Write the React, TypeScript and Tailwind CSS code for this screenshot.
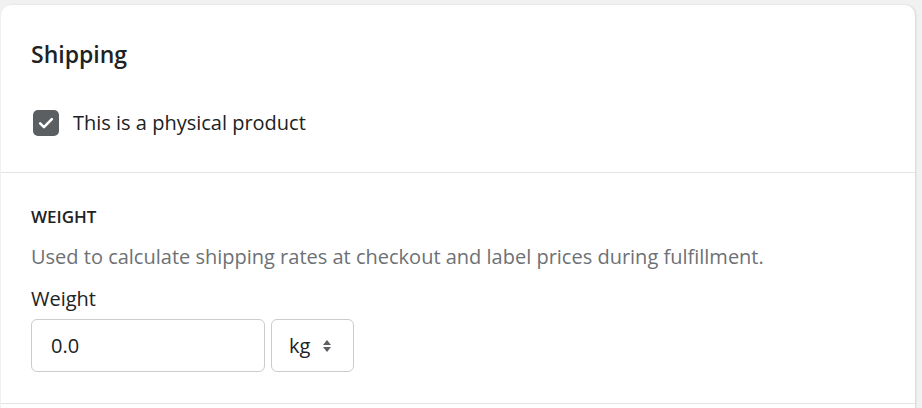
import React, { useState } from 'react';

const font = { fontFamily: '"Open Sans", "Noto Sans", sans-serif' };

export default function App() {
    const [physical, setPhysical] = useState(true);
    const [weight, setWeight] = useState('0.0');

    return (
        <div className="h-[408px] overflow-hidden bg-[#f1f1f1] pt-[5px] pr-[7px] pl-px text-[#202223]" style={font}>
            <div className="bg-white rounded-t-[10px] shadow-[1px_0_2px_rgba(0,0,0,0.12)] overflow-hidden">
                <div className="px-[30px] pt-[33px] pb-[35px]">
                    <h2 className="text-[23px] font-semibold leading-[32px]">Shipping</h2>
                    <label className="mt-[39px] flex items-center gap-[14px] cursor-pointer">
                        <button
                            type="button"
                            onClick={() => setPhysical(!physical)}
                            className="ml-[2px] w-[26px] h-[26px] rounded-[5px] bg-[#5c5f62] flex items-center justify-center"
                        >
                            {physical && (
                                <svg viewBox="0 0 20 20" className="w-[18px] h-[18px]" fill="none" stroke="white" strokeWidth="2.8" strokeLinecap="round" strokeLinejoin="round">
                                    <path d="M3.5 10.5l4.2 4.2 8.8-9" />
                                </svg>
                            )}
                        </button>
                        <span className="text-[20px] leading-[28px]">This is a physical product</span>
                    </label>
                </div>
                <div className="border-t border-[#e1e3e5] px-[30px] pt-[33px] pb-[31px]">
                    <h3 className="text-[17px] font-semibold uppercase leading-[22px]">Weight</h3>
                    <p className="mt-[15px] text-[20px] leading-[28px] text-[#6d7175]">
                        Used to calculate shipping rates at checkout and label prices during fulfillment.
                    </p>
                    <label htmlFor="weight" className="block mt-[14px] text-[20px] leading-[28px]">Weight</label>
                    <div className="mt-[6px] flex gap-[6px]">
                        <input
                            id="weight"
                            value={weight}
                            onChange={e => setWeight(e.target.value)}
                            className="w-[234px] h-[53px] px-[19px] rounded-[6px] border border-[#c9cccf] text-[20px] outline-none"
                        />
                        <div className="w-[83px] h-[53px] rounded-[6px] border border-[#c9cccf] flex items-center pl-[17px] gap-[12px] text-[20px]">
                            <span>kg</span>
                            <svg viewBox="0 0 10 14" className="w-[10px] h-[14px]" fill="#5c5f62">
                                <path d="M5 1l4 5H1z" />
                                <path d="M5 13l4-5H1z" />
                            </svg>
                        </div>
                    </div>
                </div>
                <div className="border-t border-[#e1e3e5] h-[20px]" />
            </div>
        </div>
    );
}
